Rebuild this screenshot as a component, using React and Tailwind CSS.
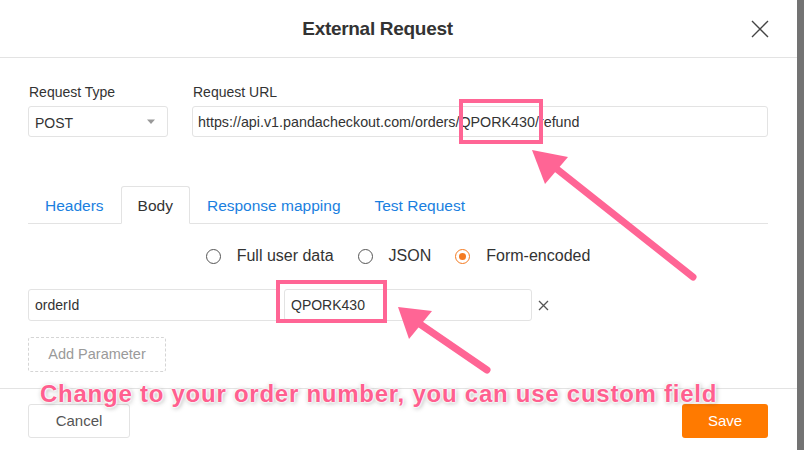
import { useState } from "react";

const Radio = ({ label, checked, onClick }) => (
    <button onClick={onClick} className="flex items-center gap-[16px] text-[16px] text-[#333]">
        <span
            className={`w-[15px] h-[15px] rounded-full border-[1.5px] flex items-center justify-center ${
                checked ? "border-[#f47a20]" : "border-[#555]"
            }`}
        >
            {checked && <span className="w-[7px] h-[7px] rounded-full bg-[#f47a20]" />}
        </span>
        <span>{label}</span>
    </button>
);

const App = () => {
    const [tab, setTab] = useState("Body");
    const [mode, setMode] = useState("form");
    const tabs = ["Headers", "Body", "Response mapping", "Test Request"];

    return (
        <div className="relative flex w-[804px] h-[450px] overflow-hidden font-['Liberation_Sans',Arial,sans-serif] text-[#333]">
            <div className="w-[797px] h-full bg-white flex flex-col">
                {/* Header */}
                <div className="h-[58px] border-b border-[#e3e3e3] grid grid-cols-[1fr_auto_1fr] items-center shrink-0">
                    <div />
                    <h1 className="text-[19px] font-bold text-[#333] tracking-[-0.3px] mt-[2px] mr-[42px]">External Request</h1>
                    <div className="flex justify-end pr-[28px]">
                        <svg width="18" height="18" viewBox="0 0 18 18" className="text-[#444]">
                            <path d="M1 1L17 17M17 1L1 17" stroke="currentColor" strokeWidth="1.4" />
                        </svg>
                    </div>
                </div>

                <div className="px-[28px] pr-[29px] pt-[26px] flex flex-col">
                    {/* Type + URL */}
                    <div className="flex gap-[24px]">
                        <div className="w-[140px]">
                            <div className="text-[14px] leading-[16px] mb-[6px] ml-[1px]">Request Type</div>
                            <div className="h-[31px] border border-[#e3e3e3] rounded-[3px] flex items-center justify-between px-[6px]">
                                <span className="text-[14px] text-[#333] mt-[3px]">POST</span>
                                <svg width="10" height="6" viewBox="0 0 10 6" className="mr-[5px]">
                                    <path d="M1 0.5h8L5 5z" fill="#999" />
                                </svg>
                            </div>
                        </div>
                        <div className="flex-1">
                            <div className="text-[14px] leading-[16px] mb-[6px] ml-[1px]">Request URL</div>
                            <div className="h-[31px] border border-[#e3e3e3] rounded-[3px] flex items-center px-[5px] text-[14.3px] text-[#333]">
                                <span className="mt-[2px]">https://api.v1.pandacheckout.com/orders/QPORK430/refund</span>
                            </div>
                        </div>
                    </div>

                    {/* Tabs */}
                    <div className="mt-[49px] flex border-b border-[#e3e3e3] h-[38px]">
                        {tabs.map((t) => (
                            <button
                                key={t}
                                onClick={() => setTab(t)}
                                className={`px-[16px] text-[15.5px] leading-[38px] rounded-t-[3px] -mb-[1px] ${
                                    tab === t
                                        ? "border border-[#e3e3e3] border-b-white bg-white text-[#333]"
                                        : "border border-transparent text-[#1a7fe0]"
                                }`}
                            >
                                {t}
                            </button>
                        ))}
                    </div>

                    {/* Body mode */}
                    <div className="mt-[22px] h-[20px] flex items-center justify-center gap-[24px]">
                        <Radio label="Full user data" checked={mode === "full"} onClick={() => setMode("full")} />
                        <Radio label="JSON" checked={mode === "json"} onClick={() => setMode("json")} />
                        <Radio label="Form-encoded" checked={mode === "form"} onClick={() => setMode("form")} />
                    </div>

                    {/* Parameters */}
                    <div className="mt-[23px] flex items-center">
                        <div className="w-[252px] h-[32px] border border-[#e3e3e3] rounded-[3px] flex items-center px-[6px] text-[14px]">
                            orderId
                        </div>
                        <div className="ml-[4px] w-[248px] h-[32px] border border-[#e3e3e3] rounded-[3px] flex items-center px-[6px] text-[14px]">
                            QPORK430
                        </div>
                        <svg width="11" height="11" viewBox="0 0 11 11" className="ml-[6px] text-[#555]">
                            <path d="M1 1L10 10M10 1L1 10" stroke="currentColor" strokeWidth="1.3" />
                        </svg>
                    </div>

                    <div className="mt-[16px]">
                        <button className="w-[138px] h-[35px] border border-dashed border-[#d5d5d5] rounded-[3px] text-[14.5px] text-[#9a9a9a]">
                            Add Parameter
                        </button>
                    </div>
                </div>

                {/* Footer */}
                <div className="mt-[16px] border-t border-[#e3e3e3] flex items-center justify-between px-[28px] pr-[29px] pt-[15px]">
                    <button className="w-[102px] h-[34px] border border-[#e3e3e3] rounded-[3px] text-[15px] text-[#555]">
                        Cancel
                    </button>
                    <button className="w-[86px] h-[34px] rounded-[3px] bg-[#ff7a00] text-[15px] text-white">
                        Save
                    </button>
                </div>
            </div>
            <div className="flex-1 bg-[#737373]" />

            {/* Annotations */}
            <svg className="absolute inset-0 pointer-events-none" width="804" height="450">
                <rect x="461" y="101" width="80" height="41" fill="none" stroke="#ff6595" strokeWidth="4" />
                <rect x="278" y="282" width="107" height="39" fill="none" stroke="#ff6595" strokeWidth="4" />
                <line x1="693" y1="277" x2="553" y2="166" stroke="#ff6595" strokeWidth="7" strokeLinecap="round" />
                <path d="M532 150L568 157L545 184Z" fill="#ff6595" />
                <line x1="487" y1="370" x2="414" y2="320" stroke="#ff6595" strokeWidth="7" strokeLinecap="round" />
                <path d="M398 307L432 311L409 339Z" fill="#ff6595" />
            </svg>
            <div className="absolute left-[40px] top-[376px] text-[24px] font-bold text-[#ff5f8f] tracking-[0.75px] [text-shadow:0_0_2px_#fff,0_0_2px_#fff,0_0_3px_#fff,0_0_3px_#fff,1px_1px_5px_rgba(0,0,0,0.4)]">
                Change to your order number, you can use custom field
            </div>
        </div>
    );
};

export default App;
